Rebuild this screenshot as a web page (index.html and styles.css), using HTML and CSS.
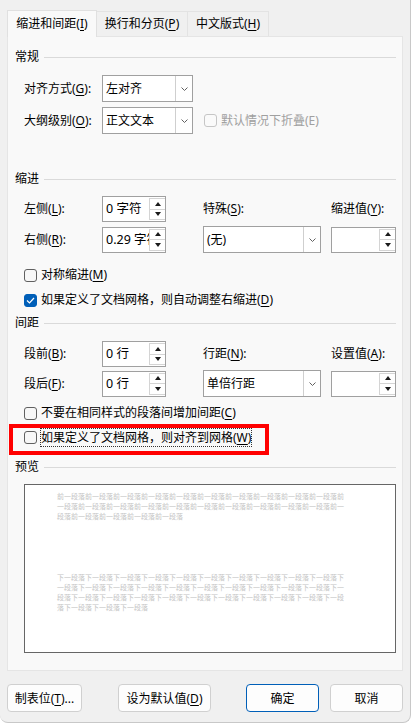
FILE: index.html
```html
<!DOCTYPE html>
<html lang="zh-CN">
<head>
    <meta charset="UTF-8">
    <meta name="viewport" content="width=device-width, initial-scale=1.0">
    <title>段落</title>
    <link rel="stylesheet" href="styles.css">
</head>
<body>
    <div class="window">
        <!-- 选项卡 -->
        <div class="tabs">
            <div class="tab active">缩进和间距(<u>I</u>)</div>
            <div class="tab">换行和分页(<u>P</u>)</div>
            <div class="tab">中文版式(<u>H</u>)</div>
        </div>

        <div class="panel">
            <!-- 常规 -->
            <div class="group-title">常规</div>
            <div class="field-row first">
                <span class="label">对齐方式(<u>G</u>):</span>
                <div class="combo small"><span class="combo-text">左对齐</span><span class="combo-btn"><svg width="7" height="4" viewBox="0 0 7 4"><polyline points="0.5,0.5 3.5,3.5 6.5,0.5" fill="none" stroke="#606060" stroke-width="1"/></svg></span></div>
            </div>
            <div class="field-row">
                <span class="label">大纲级别(<u>O</u>):</span>
                <div class="combo small"><span class="combo-text">正文文本</span><span class="combo-btn"><svg width="7" height="4" viewBox="0 0 7 4"><polyline points="0.5,0.5 3.5,3.5 6.5,0.5" fill="none" stroke="#606060" stroke-width="1"/></svg></span></div>
                <label class="check disabled collapse"><span class="box"></span><span>默认情况下折叠(E)</span></label>
            </div>

            <!-- 缩进 -->
            <div class="group-title indent-title">缩进</div>
            <div class="field-grid">
                <span class="label">左侧(<u>L</u>):</span>
                <div class="spin"><span class="spin-text">0 字符</span><div class="spin-btns"><span class="up"></span><span class="down"></span></div></div>
                <span class="label">特殊(<u>S</u>):</span>
                <span class="label">缩进值(<u>Y</u>):</span>

                <span class="label">右侧(<u>R</u>):</span>
                <div class="spin"><span class="spin-text">0.29 字符</span><div class="spin-btns"><span class="up"></span><span class="down"></span></div></div>
                <div class="combo wide"><span class="combo-text">(无)</span><span class="combo-btn"><svg width="7" height="4" viewBox="0 0 7 4"><polyline points="0.5,0.5 3.5,3.5 6.5,0.5" fill="none" stroke="#606060" stroke-width="1"/></svg></span></div>
                <div class="spin value"><span class="spin-text"></span><div class="spin-btns"><span class="up"></span><span class="down"></span></div></div>
            </div>
            <label class="check row-check first-check"><span class="box"></span><span>对称缩进(<u>M</u>)</span></label>
            <label class="check row-check"><span class="box checked"><svg width="9" height="7" viewBox="0 0 9 7"><polyline points="1,3.5 3.5,6 8,1" fill="none" stroke="#fff" stroke-width="1.2"/></svg></span><span>如果定义了文档网格，则自动调整右缩进(<u>D</u>)</span></label>

            <!-- 间距 -->
            <div class="group-title spacing-title">间距</div>
            <div class="field-grid spacing-grid">
                <span class="label">段前(<u>B</u>):</span>
                <div class="spin"><span class="spin-text">0 行</span><div class="spin-btns"><span class="up"></span><span class="down"></span></div></div>
                <span class="label">行距(<u>N</u>):</span>
                <span class="label">设置值(<u>A</u>):</span>

                <span class="label">段后(<u>F</u>):</span>
                <div class="spin"><span class="spin-text">0 行</span><div class="spin-btns"><span class="up"></span><span class="down"></span></div></div>
                <div class="combo wide"><span class="combo-text">单倍行距</span><span class="combo-btn"><svg width="7" height="4" viewBox="0 0 7 4"><polyline points="0.5,0.5 3.5,3.5 6.5,0.5" fill="none" stroke="#606060" stroke-width="1"/></svg></span></div>
                <div class="spin value"><span class="spin-text"></span><div class="spin-btns"><span class="up"></span><span class="down"></span></div></div>
            </div>
            <label class="check row-check no-space"><span class="box"></span><span>不要在相同样式的段落间增加间距(<u>C</u>)</span></label>
            <label class="check row-check snap marked"><span class="box"></span><span class="focus">如果定义了文档网格，则对齐到网格(<u>W</u>)</span></label>

            <!-- 预览 -->
            <div class="group-title preview-title">预览</div>
            <div class="preview">
                <p class="prev-text">前一段落前一段落前一段落前一段落前一段落前一段落前一段落前一段落前一段落前一段落前一段落前一段落前一段落前一段落前一段落前一段落前一段落前一段落前一段落前一段落前一段落前一段落前一段落前一段落前一段落</p>
                <p class="prev-text next">下一段落下一段落下一段落下一段落下一段落下一段落下一段落下一段落下一段落下一段落下一段落下一段落下一段落下一段落下一段落下一段落下一段落下一段落下一段落下一段落下一段落下一段落下一段落下一段落下一段落下一段落下一段落下一段落下一段落下一段落下一段落下一段落下一段落下一段落</p>
            </div>
        </div>

        <!-- 底部按钮 -->
        <div class="buttons">
            <button class="btn tabs-btn">制表位(<u>T</u>)...</button>
            <button class="btn default-btn">设为默认值(<u>D</u>)</button>
            <button class="btn ok">确定</button>
            <button class="btn cancel">取消</button>
        </div>
    </div>
</body>
</html>
```

FILE: styles.css
```css
body {
    margin: 0;
    background: #ffffff;
    font-family: "Segoe UI", "Noto Sans", "Noto Sans CJK SC", sans-serif;
    font-size: 12px;
    color: #000;
}

u {
    text-decoration-thickness: 1px;
    text-underline-offset: 2px;
}

.window {
    width: 410px;
    height: 722px;
    background: #f0f0f0;
    border-right: 1px solid #c8c8c8;
    border-bottom: 1px solid #c8c8c8;
    border-bottom-left-radius: 8px;
    border-bottom-right-radius: 8px;
    overflow: hidden;
}

/* 选项卡 */
.tabs {
    display: flex;
    align-items: flex-end;
    height: 36px;
    padding-left: 7px;
}

.tab {
    box-sizing: border-box;
    height: 25px;
    line-height: 23px;
    padding: 0;
    text-align: center;
    white-space: nowrap;
    border: 1px solid #e3e3e3;
    border-bottom: none;
    background: #f0f0f0;
}

.tab + .tab {
    border-left: none;
}

.tab:nth-child(2) {
    width: 91px;
}

.tab:nth-child(3) {
    width: 81px;
}

.tab.active {
    position: relative;
    z-index: 1;
    width: 90px;
    height: 27px;
    line-height: 25px;
    margin-bottom: -1px;
    background: #f9f9f9;
    border-color: #e0e0e0;
}

/* 面板 */
.panel {
    margin: 0 7px;
    padding: 12px 6px 17px 7px;
    background: #f9f9f9;
    border: 1px solid #e5e5e5;
}

.group-title {
    display: flex;
    align-items: center;
    gap: 5px;
    height: 16px;
    line-height: 16px;
}

.group-title::after {
    content: "";
    flex: 1;
    border-top: 1px solid #dadada;
}

.indent-title {
    margin-top: 37px;
}

.spacing-title {
    margin-top: 5px;
}

.preview-title {
    margin-top: 12px;
}

.field-row {
    display: flex;
    align-items: center;
    height: 27px;
    padding-left: 9px;
    margin-top: 5px;
}

.field-row.first {
    margin-top: 10px;
}

.label {
    line-height: 16px;
    white-space: nowrap;
}

.field-row .label {
    width: 78px;
}

/* 组合框 */
.combo {
    box-sizing: border-box;
    display: flex;
    height: 27px;
    border: 1px solid #a0a0a0;
    background: #fff;
}

.combo.small {
    width: 91px;
}

.combo.wide {
    width: 118px;
}

.combo-text {
    flex: 1;
    padding-left: 3px;
    line-height: 25px;
    white-space: nowrap;
}

.combo-btn {
    width: 16px;
    display: flex;
    align-items: center;
    justify-content: center;
    border-left: 1px solid #cfcfcf;
}

/* 微调框 */
.field-grid {
    display: grid;
    grid-template-columns: 78px 101px 128px 65px;
    grid-template-rows: 26px 27px;
    row-gap: 4px;
    align-items: center;
    padding-left: 9px;
    margin-top: 9px;
}

.spacing-grid {
    row-gap: 3px;
    margin-top: 10px;
}

.spin {
    box-sizing: border-box;
    display: flex;
    width: 64px;
    height: 26px;
    border: 1px solid #a0a0a0;
    background: #fff;
}

.spin.value {
    width: 65px;
}

.spin-text {
    flex: 1;
    overflow: hidden;
    padding-left: 3px;
    line-height: 23px;
    font-size: 12.5px;
    white-space: nowrap;
}

.spin-btns {
    display: flex;
    flex-direction: column;
    width: 15px;
    margin: 1px 0;
    border: 1px solid #d4d4d4;
    border-right: none;
}

.spin-btns span {
    flex: 1;
    display: flex;
    align-items: center;
    justify-content: center;
}

.spin-btns .up {
    border-bottom: 1px solid #d4d4d4;
}

.spin-btns .up::before,
.spin-btns .down::before {
    content: "";
    border-left: 3.5px solid transparent;
    border-right: 3.5px solid transparent;
}

.spin-btns .up::before {
    border-bottom: 4px solid #1a1a1a;
}

.spin-btns .down::before {
    border-top: 4px solid #1a1a1a;
}

/* 复选框 */
.check {
    display: flex;
    align-items: center;
    gap: 4px;
    line-height: 16px;
    white-space: nowrap;
}

.check .box {
    box-sizing: border-box;
    display: flex;
    align-items: center;
    justify-content: center;
    width: 13px;
    height: 13px;
    border: 1px solid #606060;
    border-radius: 3px;
    background: #f7f7f7;
}

.check .box.checked {
    border-color: #005fb8;
    background: #005fb8;
}

.check.disabled {
    color: #a0a0a0;
}

.check.disabled .box {
    border-color: #c6c6c6;
    background: #fafafa;
}

.collapse {
    margin-left: 11px;
}

.row-check {
    height: 20px;
    padding-left: 9px;
    margin-top: 5px;
}

.row-check.first-check {
    margin-top: 12px;
}

.row-check.no-space {
    margin-top: 6px;
}

.row-check.snap {
    margin-top: 4px;
}

.focus {
    margin-left: -1px;
    line-height: 17px;
    border: 1px dotted #333;
}

/* 红框标注 */
.marked {
    position: relative;
}

.marked::after {
    content: "";
    position: absolute;
    left: -6px;
    top: -3px;
    width: 252px;
    height: 23px;
    border: 4px solid #ff0000;
}

/* 预览 */
.preview {
    box-sizing: border-box;
    height: 169px;
    margin: 9px 0 0 9px;
    padding: 6px 0 0 32px;
    background: #fff;
    border: 1px solid #666;
}

.prev-text {
    width: 288px;
    margin: 0;
    font-family: "Noto Sans CJK SC", sans-serif;
    font-size: 7px;
    line-height: 10px;
    color: #c4c4c4;
}

.prev-text.next {
    margin-top: 51px;
}

/* 按钮 */
.buttons {
    display: flex;
    padding-left: 7px;
    margin-top: 13px;
}

.btn {
    box-sizing: border-box;
    height: 28px;
    padding: 0;
    font-family: inherit;
    font-size: 12px;
    color: #000;
    background: #fdfdfd;
    border: 1px solid #d0d0d0;
    border-radius: 4px;
}

.tabs-btn {
    width: 75px;
}

.default-btn {
    width: 93px;
    margin-left: 36px;
}

.ok {
    width: 73px;
    margin-left: 35px;
    border-color: #005fb8;
}

.cancel {
    width: 73px;
    margin-left: 11px;
}
```
